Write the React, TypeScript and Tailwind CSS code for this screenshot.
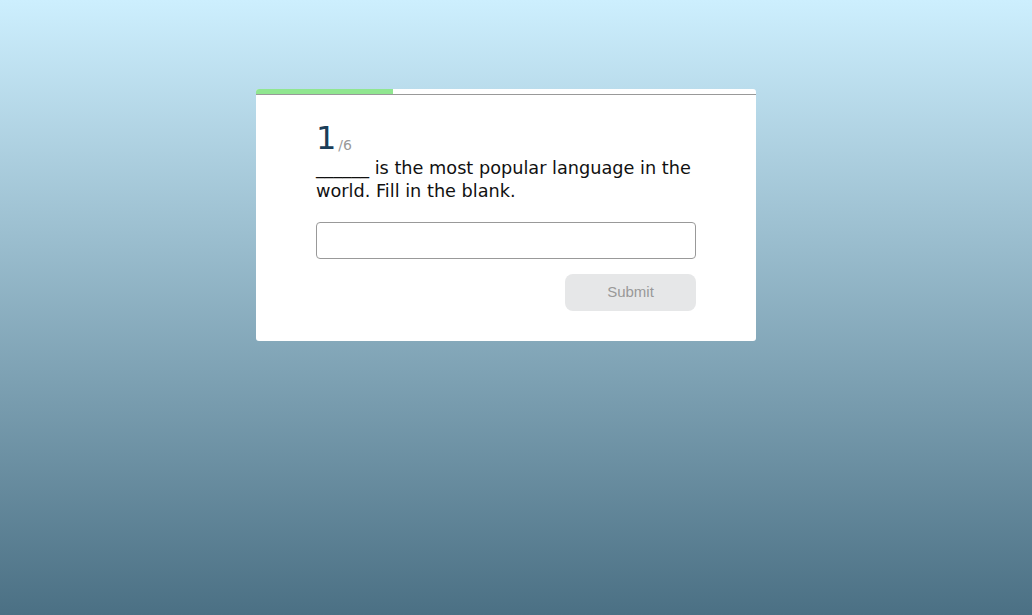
export default function App() {
  return (
    <div className="w-full h-[615px] bg-[linear-gradient(to_bottom,#cdeffe,#4b7084)] flex justify-center pr-[20px] pt-[89px]">
      <div className="w-[500px] h-[252px] bg-white rounded-[3px] overflow-hidden flex flex-col">
        <div className="h-[6px] border-b border-[#999] flex">
          <div className="w-[137px] h-[5px] bg-[#90e690]"></div>
        </div>
        <div className="px-[60px] pt-[27px] flex flex-col">
          <div className="flex items-end font-['DejaVu_Sans',sans-serif] leading-none">
            <span className="text-[32px] text-[#1b3d57]">1</span>
            <span className="text-[14px] text-[#999] ml-[2px] mb-[2px]">/6</span>
          </div>
          <p className="mt-[3px] text-[17.7px] leading-[23px] text-[#111] font-['DejaVu_Sans',sans-serif]">
            ______ is the most popular language in the world. Fill in the blank.
          </p>
          <input className="mt-[19px] h-[37px] w-[380px] border border-[#999] rounded-[4px] outline-none" />
          <div className="flex justify-end mt-[15px]">
            <button className="w-[131px] h-[37px] rounded-[8px] bg-[#e6e7e8] text-[#999] text-[15px] font-['Liberation_Sans',sans-serif]">
              Submit
            </button>
          </div>
        </div>
      </div>
    </div>
  );
}
